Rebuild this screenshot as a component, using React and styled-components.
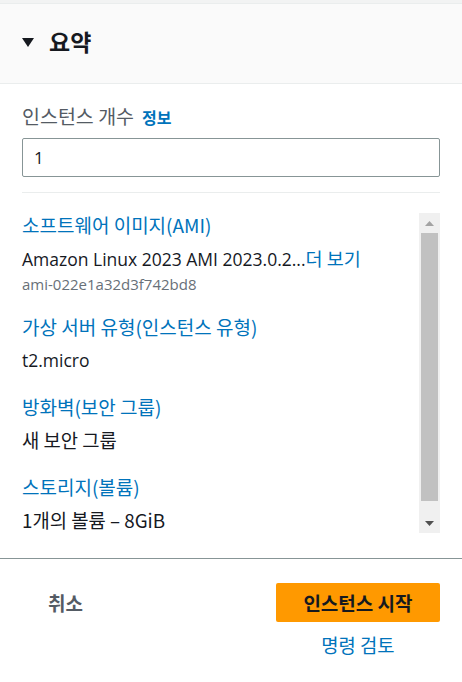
import React from "react";
import styled, { createGlobalStyle } from "styled-components";

const Global = createGlobalStyle`
  html, body { margin: 0; padding: 0; background: #ffffff; }
  body { font-family: "Open Sans", "Noto Sans", "Noto Sans CJK KR", sans-serif; color: #16191f; }
  * { box-sizing: border-box; }
`;

const KR = `"Noto Sans CJK KR", "Noto Sans", sans-serif`;
const LAT = `"Open Sans", "Noto Sans", "Noto Sans CJK KR", sans-serif`;

const Page = styled.div`
  width: 462px;
  height: 682px;
  display: flex;
  flex-direction: column;
  border-top: 3px solid #f2f3f3;
`;

const Header = styled.div`
  height: 81px;
  background: #fafafa;
  border-top: 1px solid #eaeded;
  border-bottom: 1px solid #eaeded;
  display: flex;
  align-items: center;
  gap: 15px;
  padding: 0 22px 5px;
`;

const Caret = styled.svg`
  width: 12px;
  height: 9px;
  flex: none;
  margin-top: 3px;
`;

const HeaderTitle = styled.h2`
  margin: 0;
  font-family: ${KR};
  font-size: 23px;
  font-weight: 700;
  color: #16191f;
  line-height: 30px;
`;

const Body = styled.div`
  padding: 20px 22px 0;
  display: flex;
  flex-direction: column;
`;

const Label = styled.div`
  font-family: ${KR};
  font-size: 19.5px;
  line-height: 24px;
  color: #545b64;
  display: flex;
  align-items: baseline;
  gap: 8px;
`;

const Info = styled.span`
  font-size: 16px;
  font-weight: 700;
  color: #0073bb;
`;

const Input = styled.input`
  margin-top: 9px;
  height: 39px;
  width: 100%;
  border: 1px solid #879596;
  border-radius: 2px;
  padding: 0 11px;
  font-family: ${LAT};
  font-size: 17px;
  color: #16191f;
  outline: none;
`;

const Divider = styled.hr`
  margin: 15px 0 20px;
  border: none;
  border-top: 1px solid #eaeded;
  height: 0;
`;

const ScrollBox = styled.div`
  height: 320px;
  display: flex;
`;

const ScrollContent = styled.div`
  flex: 1;
  min-width: 0;
  display: flex;
  flex-direction: column;
  gap: 23px;
`;

const Section = styled.div`
  display: flex;
  flex-direction: column;
`;

const Title = styled.div`
  font-family: ${KR};
  font-size: 19px;
  line-height: 24px;
  color: #0073bb;
  margin-bottom: 9px;
  white-space: nowrap;
`;

const Value = styled.div`
  font-family: ${(p) => (p.$kr ? KR : LAT)};
  font-size: ${(p) => (p.$kr ? "18.8px" : "17.5px")};
  line-height: 24px;
  color: #16191f;
  white-space: nowrap;
`;

const Link = styled.span`
  color: #0073bb;
  font-family: ${KR};
  font-size: 18.5px;
`;

const Sub = styled.div`
  margin-top: 5px;
  font-family: ${LAT};
  font-size: 15px;
  line-height: 16px;
  color: #687078;
`;

const Scrollbar = styled.div`
  width: 21px;
  flex: none;
  background: #f0f0f0;
  display: flex;
  flex-direction: column;
  align-items: center;
  padding: 0 2px;
`;

const Arrow = styled.div`
  height: 20px;
  width: 100%;
  flex: none;
  display: flex;
  align-items: center;
  justify-content: center;
`;

const Track = styled.div`
  flex: 1;
  width: 100%;
  display: flex;
  flex-direction: column;
`;

const Thumb = styled.div`
  width: 100%;
  height: ${(p) => p.$size}px;
  background: #c1c1c1;
`;

const Footer = styled.div`
  margin-top: 25px;
  border-top: 1px solid #879596;
  padding: 24px 22px 0;
  display: flex;
  justify-content: space-between;
  align-items: flex-start;
`;

const CancelButton = styled.button`
  background: none;
  border: none;
  height: 39px;
  padding: 0 26px;
  font-family: ${KR};
  font-size: 19px;
  font-weight: 700;
  color: #545b64;
`;

const Actions = styled.div`
  display: flex;
  flex-direction: column;
  align-items: center;
  gap: 11px;
`;

const PrimaryButton = styled.button`
  width: 164px;
  height: 39px;
  background: #ff9900;
  border: none;
  border-radius: 2px;
  font-family: ${KR};
  font-size: 19px;
  font-weight: 700;
  color: #16191f;
  padding: 0;
`;

const TextLink = styled.a`
  font-family: ${KR};
  font-size: 18.8px;
  line-height: 24px;
  color: #0073bb;
  text-decoration: none;
`;

export default function App() {
  return (
    <>
      <Global />
      <Page>
        <Header>
          <Caret viewBox="0 0 12 9">
            <path d="M0 0 H12 L6 9 Z" fill="#16191f" />
          </Caret>
          <HeaderTitle>요약</HeaderTitle>
        </Header>
        <Body>
          <Label>
            인스턴스 개수 <Info>정보</Info>
          </Label>
          <Input defaultValue="1" />
          <Divider />
          <ScrollBox>
            <ScrollContent>
              <Section>
                <Title>소프트웨어 이미지(AMI)</Title>
                <Value>
                  Amazon Linux 2023 AMI 2023.0.2...<Link>더 보기</Link>
                </Value>
                <Sub>ami-022e1a32d3f742bd8</Sub>
              </Section>
              <Section>
                <Title>가상 서버 유형(인스턴스 유형)</Title>
                <Value>t2.micro</Value>
              </Section>
              <Section>
                <Title>방화벽(보안 그룹)</Title>
                <Value $kr>새 보안 그룹</Value>
              </Section>
              <Section>
                <Title>스토리지(볼륨)</Title>
                <Value $kr>1개의 볼륨 – 8GiB</Value>
              </Section>
            </ScrollContent>
            <Scrollbar>
              <Arrow>
                <svg width="9" height="5" viewBox="0 0 9 5">
                  <path d="M0 5 L4.5 0 L9 5 Z" fill="#a3a3a3" />
                </svg>
              </Arrow>
              <Track>
                <Thumb $size={268} />
              </Track>
              <Arrow>
                <svg width="9" height="5" viewBox="0 0 9 5">
                  <path d="M0 0 H9 L4.5 5 Z" fill="#505050" />
                </svg>
              </Arrow>
            </Scrollbar>
          </ScrollBox>
        </Body>
        <Footer>
          <CancelButton>취소</CancelButton>
          <Actions>
            <PrimaryButton>인스턴스 시작</PrimaryButton>
            <TextLink>명령 검토</TextLink>
          </Actions>
        </Footer>
      </Page>
    </>
  );
}
